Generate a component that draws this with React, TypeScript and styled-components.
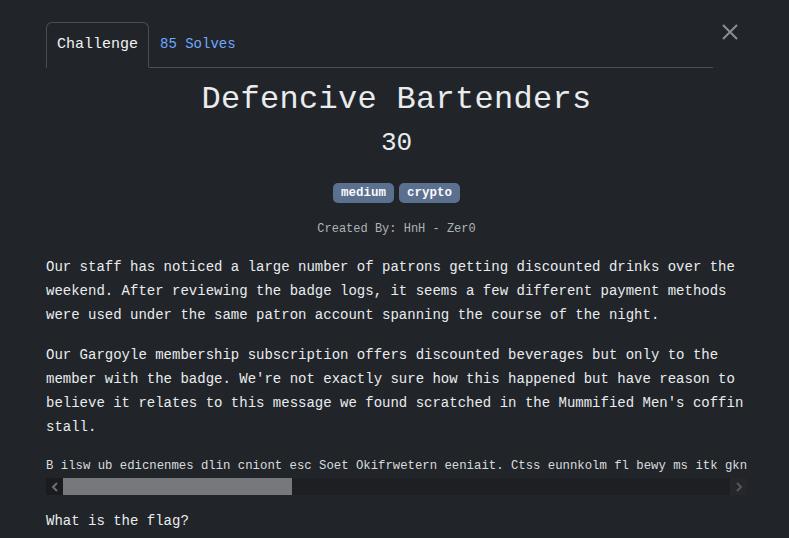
import React from "react";
import styled, { createGlobalStyle } from "styled-components";

const Global = createGlobalStyle`
  html, body { margin: 0; padding: 0; background: #212529; }
  body { font-family: "Liberation Mono", "DejaVu Sans Mono", monospace; color: #dee2e6; }
`;

const Page = styled.div`
  position: relative;
  padding: 22px 42px 0 46px;
  height: 538px;
  box-sizing: border-box;
  overflow: hidden;
`;

const CloseButton = styled.button`
  position: absolute;
  top: 24px;
  left: 722px;
  width: 16px;
  height: 16px;
  padding: 0;
  border: 0;
  background: transparent;
  cursor: pointer;
  display: flex;
`;

const Nav = styled.div`
  display: flex;
  align-items: flex-end;
  height: 45px;
  margin-right: 34px;
  border-bottom: 1px solid #4a4e54;
`;

const Tab = styled.div<{ $active?: boolean }>`
  box-sizing: border-box;
  height: ${(p) => (p.$active ? "46px" : "44px")};
  margin-bottom: ${(p) => (p.$active ? "-1px" : "0")};
  display: flex;
  align-items: center;
  padding: 0 10px 2px;
  font-size: ${(p) => (p.$active ? "15px" : "14px")};
  color: ${(p) => (p.$active ? "#f1f3f5" : "#6ea8fe")};
  background: ${(p) => (p.$active ? "#212529" : "transparent")};
  border: 1px solid ${(p) => (p.$active ? "#4a4e54" : "transparent")};
  border-bottom-color: ${(p) => (p.$active ? "#212529" : "transparent")};
  border-radius: 6px 6px 0 0;
`;

const Title = styled.h1`
  margin: 12px 0 0;
  text-align: center;
  font-size: 32px;
  line-height: 40px;
  font-weight: normal;
  letter-spacing: 0.3px;
  color: #e9ecef;
`;

const Points = styled.div`
  text-align: center;
  font-size: 26px;
  line-height: 32px;
  margin-top: 7px;
  color: #e9ecef;
`;

const Tags = styled.div`
  display: flex;
  justify-content: center;
  gap: 5px;
  margin-top: 24px;
`;

const Tag = styled.span`
  display: inline-flex;
  align-items: center;
  height: 20px;
  padding: 0 8px;
  border-radius: 5px;
  background: #5b6f8f;
  color: #f8f9fa;
  font-size: 12.5px;
  font-weight: bold;
`;

const Author = styled.div`
  text-align: center;
  margin-top: 17px;
  font-size: 12px;
  line-height: 18px;
  color: #aeb3b8;
`;

const Para = styled.p<{ $top: number }>`
  margin: ${(p) => p.$top}px 0 0;
  font-size: 14px;
  line-height: 24px;
  color: #e9ecef;
`;

const CodeBlock = styled.div`
  margin-top: 16px;
  display: flex;
  flex-direction: column;
`;

const Pre = styled.pre`
  margin: 0;
  overflow: hidden;
  font-family: "Liberation Mono", monospace;
  font-size: 12.3px;
  line-height: 22px;
  height: 22px;
  color: #d9dcdf;
  white-space: pre;
`;

const ScrollBar = styled.div`
  display: flex;
  height: 17px;
  margin-top: 1px;
  background: #1d1f22;
`;

const ScrollButton = styled.div<{ $dark?: boolean }>`
  width: 17px;
  flex: none;
  display: flex;
  align-items: center;
  justify-content: center;
  background: ${(p) => (p.$dark ? "#1a1b1e" : "#25272a")};
`;

const Track = styled.div`
  flex: 1;
  display: flex;
`;

const Thumb = styled.div`
  background: #77787b;
  height: 100%;
`;

const cipher =
  "B ilsw ub edicnenmes dlin cniont esc Soet Okifrwetern eeniait. Ctss eunnkolm fl bewy ms itk gknitp rpd fhla qmi uesoa tvwnkrot, dhts yfe ms 4351 5729 8160 2238 zyb 5186 0042 7719 3361. Vkeie xr pgjsvl tnrh lubgfm iu lpw rsqgm, jnd hwy gcbu otusy pn keqp ir. Gefp lzps dhecn qmsw tyx qfvwqw qlzrg.";

export default function App() {
  return (
    <Page>
      <Global />
      <Nav>
        <Tab $active>Challenge</Tab>
        <Tab>85 Solves</Tab>
      </Nav>
      <CloseButton aria-label="Close">
        <svg width="16" height="16" viewBox="0 0 16 16">
          <path d="M1 1 L15 15 M15 1 L1 15" stroke="#8b8d90" strokeWidth="2" />
        </svg>
      </CloseButton>
      <Title>Defencive Bartenders</Title>
      <Points>30</Points>
      <Tags>
        <Tag>medium</Tag>
        <Tag>crypto</Tag>
      </Tags>
      <Author>Created By: HnH - Zer0</Author>
      <Para $top={17}>
        Our staff has noticed a large number of patrons getting discounted drinks over the
        weekend. After reviewing the badge logs, it seems a few different payment methods
        were used under the same patron account spanning the course of the night.
      </Para>
      <Para $top={16}>
        Our Gargoyle membership subscription offers discounted beverages but only to the
        member with the badge. We're not exactly sure how this happened but have reason to
        believe it relates to this message we found scratched in the Mummified Men's coffin
        stall.
      </Para>
      <CodeBlock>
        <Pre>{cipher}</Pre>
        <ScrollBar>
          <ScrollButton $dark>
            <svg width="8" height="10" viewBox="0 0 8 10">
              <path d="M6 1 L2 5 L6 9" fill="none" stroke="#6c6e71" strokeWidth="2" />
            </svg>
          </ScrollButton>
          <Track>
            <Thumb style={{ width: "34.3%" }} />
          </Track>
          <ScrollButton>
            <svg width="8" height="10" viewBox="0 0 8 10">
              <path d="M2 1 L6 5 L2 9" fill="none" stroke="#55575a" strokeWidth="2" />
            </svg>
          </ScrollButton>
        </ScrollBar>
      </CodeBlock>
      <Para $top={14}>What is the flag?</Para>
    </Page>
  );
}
